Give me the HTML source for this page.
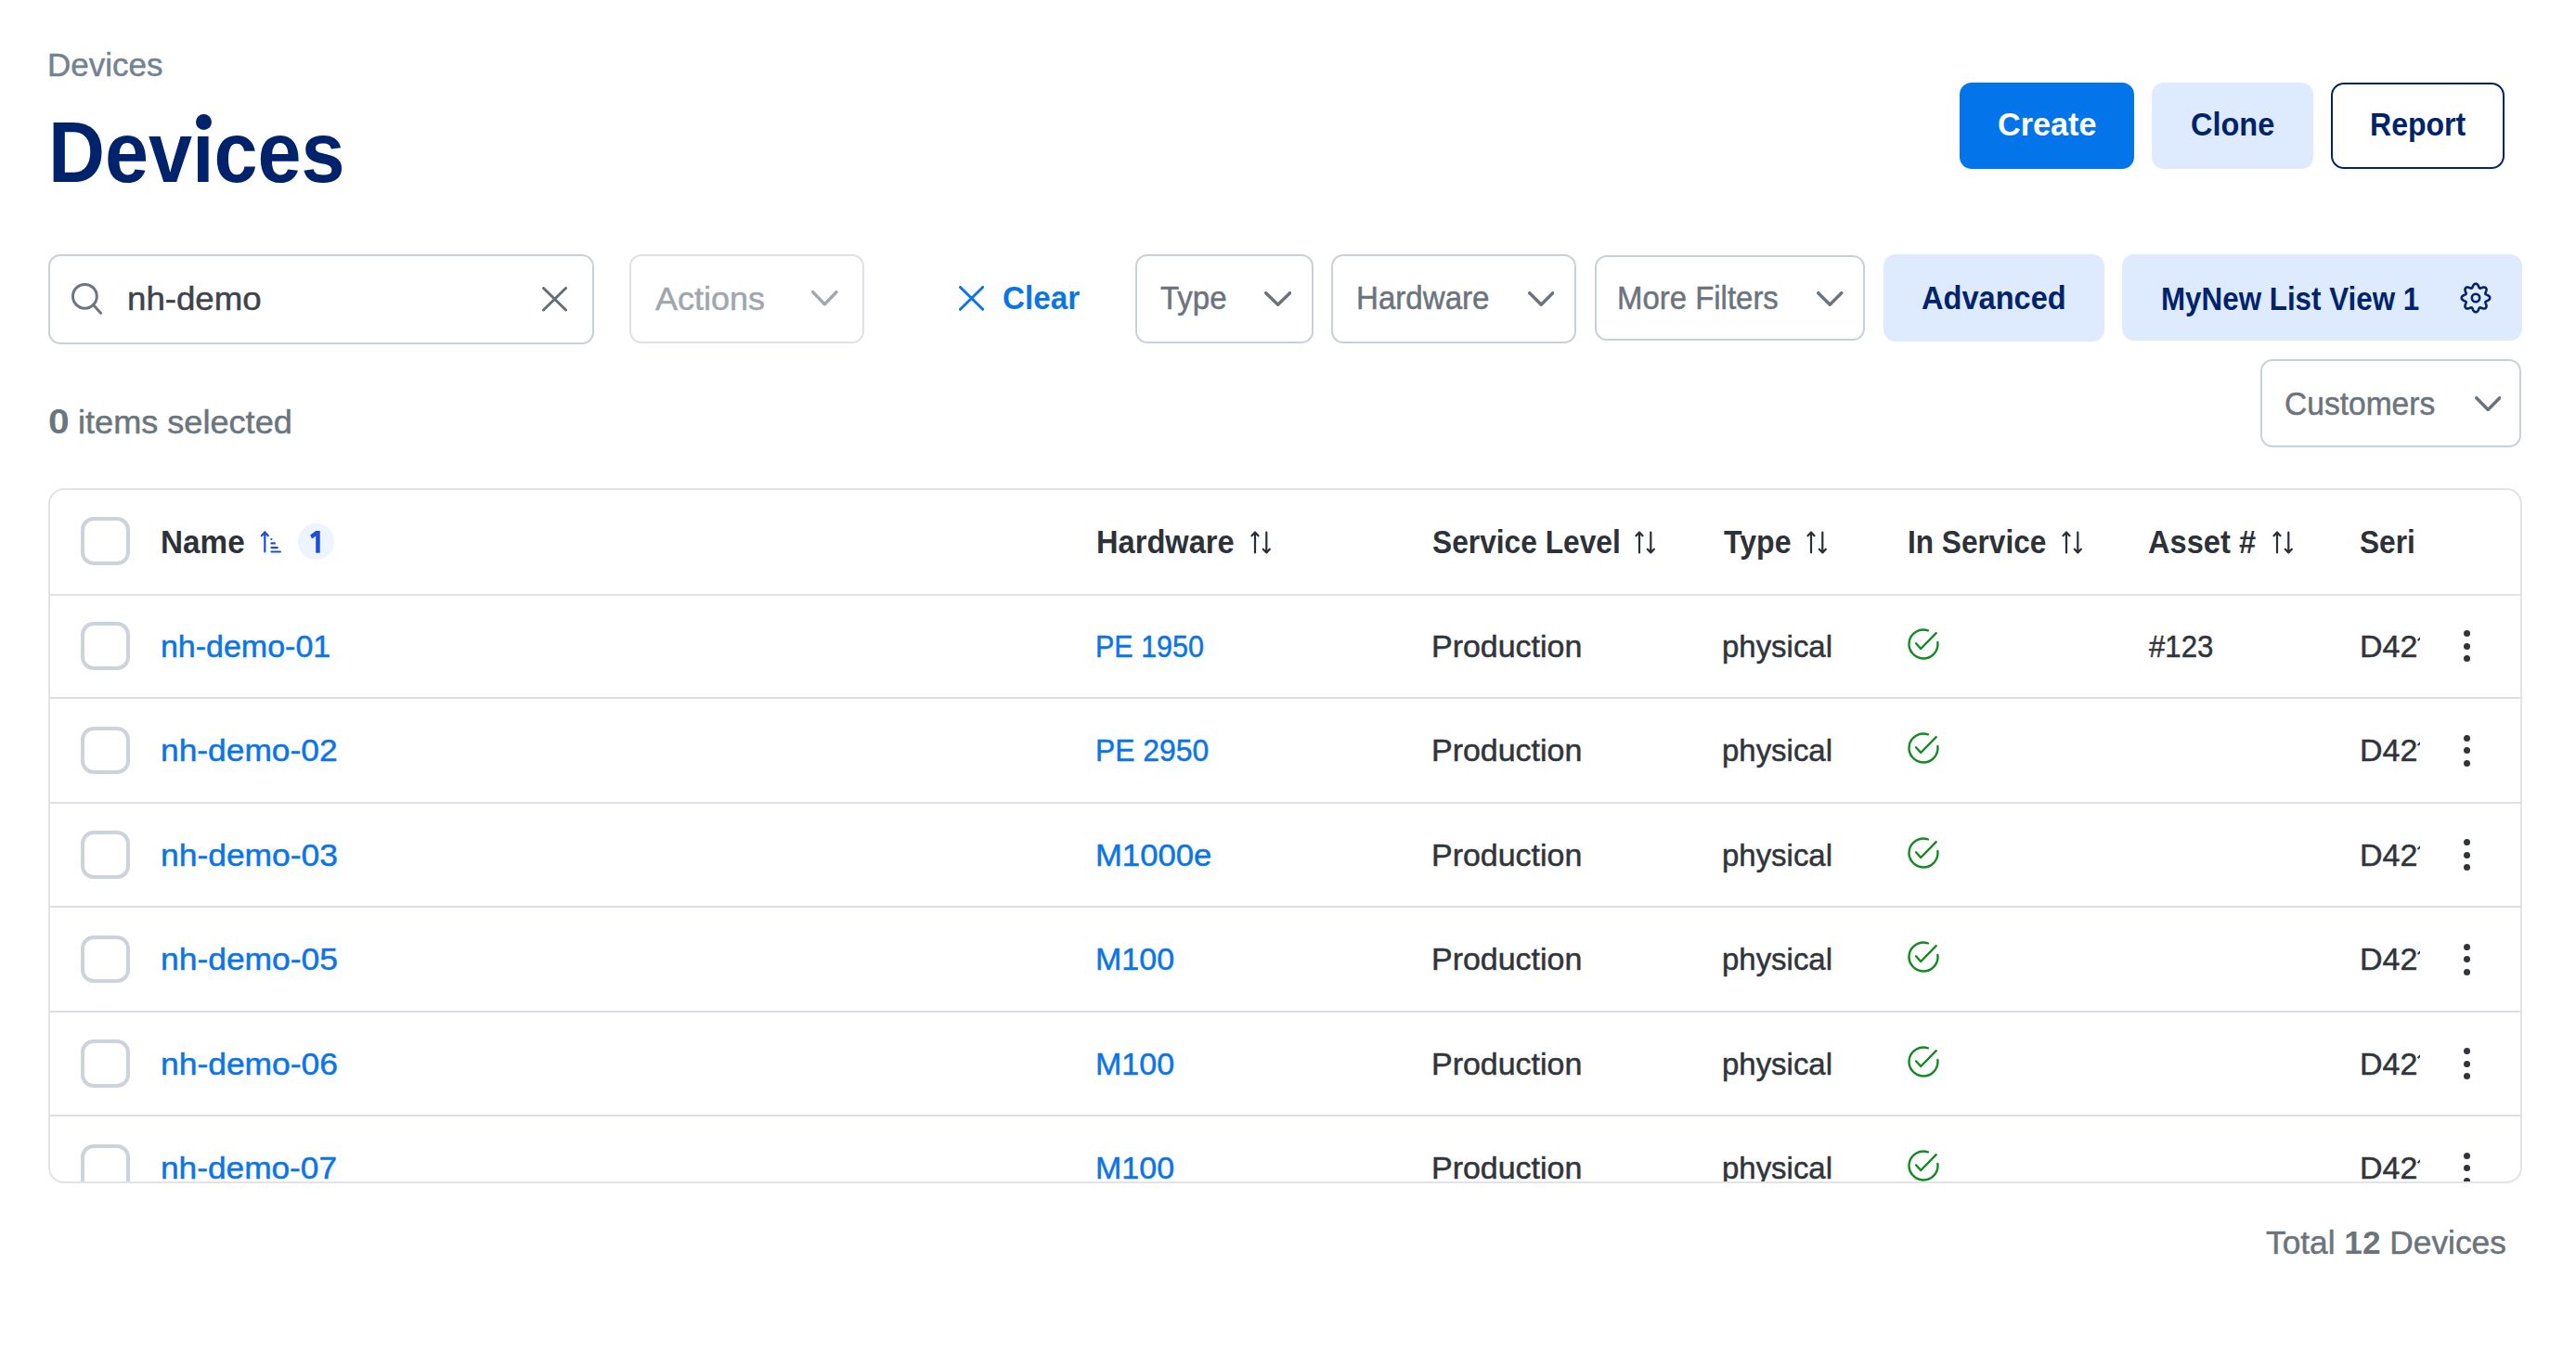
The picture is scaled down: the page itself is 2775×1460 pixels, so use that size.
<!DOCTYPE html>
<html><head><meta charset="utf-8"><title>Devices</title>
<style>
html,body{margin:0;padding:0;background:#fff;width:2775px;height:1460px;overflow:hidden}
body{position:relative;font-family:"Liberation Sans",sans-serif}
.a{position:absolute;display:block}
.t{position:absolute;line-height:1;white-space:nowrap;transform-origin:0 0}
.t b{font-weight:700;-webkit-text-stroke:0}
.r{-webkit-text-stroke:0.5px currentColor}
#tbl{position:absolute;left:0;top:0;width:2775px;height:1272.5px;overflow:hidden}
</style></head><body>
<div class=a style='left:211px;top:122.5px;width:17px;height:17px;border-radius:50%;background:#00236B'></div><div class=a style='left:2111.0px;top:89.0px;width:188.0px;height:93.0px;box-sizing:border-box;background:#0474EA;border-radius:13px'></div><div class=a style='left:2318.0px;top:89.0px;width:174.0px;height:93.0px;box-sizing:border-box;background:#DEEBFF;border-radius:13px'></div><div class=a style='left:2511.0px;top:89.0px;width:187.0px;height:93.0px;box-sizing:border-box;border:2.5px solid #00236B;border-radius:14px'></div><div class=a style='left:52.0px;top:274.0px;width:588.0px;height:97.0px;box-sizing:border-box;border:2px solid #C9D0D7;border-radius:13px;background:#fff'></div><div class=a style='left:678.0px;top:274.0px;width:252.5px;height:96.0px;box-sizing:border-box;border:2px solid #DEE2E7;border-radius:13px'></div><div class=a style='left:1223.0px;top:274.0px;width:192.0px;height:95.5px;box-sizing:border-box;border:2px solid #C9D0D7;border-radius:13px;background:#fff'></div><div class=a style='left:1434.0px;top:274.0px;width:263.5px;height:95.5px;box-sizing:border-box;border:2px solid #C9D0D7;border-radius:13px;background:#fff'></div><div class=a style='left:1717.5px;top:274.5px;width:291.8px;height:92.8px;box-sizing:border-box;border:2px solid #C9D0D7;border-radius:13px;background:#fff'></div><div class=a style='left:2029.0px;top:274.0px;width:238.0px;height:93.7px;box-sizing:border-box;background:#DEEBFF;border-radius:13px'></div><div class=a style='left:2286.0px;top:274.0px;width:431.0px;height:92.7px;box-sizing:border-box;background:#DEEBFF;border-radius:13px'></div><div class=a style='left:2435.4px;top:387.0px;width:280.9px;height:94.7px;box-sizing:border-box;border:2px solid #C9D0D7;border-radius:13px;background:#fff'></div><svg class=a style='left:70px;top:300px' width='45' height='45'><circle cx='21.4' cy='19.3' r='12.9' fill='none' stroke='#6C7680' stroke-width='3'/><path d='M30.5 28.4L38.5 37.3' stroke='#6C7680' stroke-width='3' stroke-linecap='round'/></svg><svg class=a style='left:584.0px;top:309.0px' width='27.0' height='26.5'><path d='M1.5 1.5L25.5 25.0M25.5 1.5L1.5 25.0' stroke='#646D76' stroke-width='3' stroke-linecap='round'/></svg><svg class=a style='left:874.3px;top:313.4px' width='28.7' height='16.6' viewBox='0 0 28.7 16.6'><polyline points='1.75,1.75 14.35,14.85 26.95,1.75' fill='none' stroke='#A3A8AE' stroke-width='3.5' stroke-linecap='round' stroke-linejoin='round'/></svg><svg class=a style='left:1033.0px;top:308.0px' width='27.2' height='26.8'><path d='M1.5 1.5L25.700000000000045 25.30000000000001M25.700000000000045 1.5L1.5 25.30000000000001' stroke='#0A74E8' stroke-width='3' stroke-linecap='round'/></svg><svg class=a style='left:1362.0px;top:313.7px' width='29.3' height='16.1' viewBox='0 0 29.3 16.1'><polyline points='1.75,1.75 14.65,14.35 27.55,1.75' fill='none' stroke='#6B747D' stroke-width='3.5' stroke-linecap='round' stroke-linejoin='round'/></svg><svg class=a style='left:1645.5px;top:313.7px' width='28.5' height='16.1' viewBox='0 0 28.5 16.1'><polyline points='1.75,1.75 14.25,14.35 26.75,1.75' fill='none' stroke='#6B747D' stroke-width='3.5' stroke-linecap='round' stroke-linejoin='round'/></svg><svg class=a style='left:1957.3px;top:313.7px' width='28.5' height='16.1' viewBox='0 0 28.5 16.1'><polyline points='1.75,1.75 14.25,14.35 26.75,1.75' fill='none' stroke='#6B747D' stroke-width='3.5' stroke-linecap='round' stroke-linejoin='round'/></svg><svg class=a style='left:2665.5px;top:426.7px' width='28.5' height='16.3' viewBox='0 0 28.5 16.3'><polyline points='1.75,1.75 14.25,14.55 26.75,1.75' fill='none' stroke='#6B747D' stroke-width='3.5' stroke-linecap='round' stroke-linejoin='round'/></svg><svg class=a style='left:2650px;top:303.7px' width='34' height='34'><path d='M17.00 1.80 L17.60 1.84 L18.18 2.03 L18.73 2.40 L19.22 2.95 L19.66 3.65 L20.02 4.41 L20.34 5.15 L20.64 5.80 L20.95 6.28 L21.32 6.56 L21.78 6.63 L22.35 6.51 L23.02 6.26 L23.77 5.96 L24.56 5.68 L25.36 5.50 L26.10 5.46 L26.75 5.58 L27.30 5.86 L27.75 6.25 L28.14 6.70 L28.42 7.25 L28.54 7.90 L28.50 8.64 L28.32 9.44 L28.04 10.23 L27.74 10.98 L27.49 11.65 L27.37 12.22 L27.44 12.68 L27.72 13.05 L28.20 13.36 L28.85 13.66 L29.59 13.98 L30.35 14.34 L31.05 14.78 L31.60 15.27 L31.97 15.82 L32.16 16.40 L32.20 17.00 L32.16 17.60 L31.97 18.18 L31.60 18.73 L31.05 19.22 L30.35 19.66 L29.59 20.02 L28.85 20.34 L28.20 20.64 L27.72 20.95 L27.44 21.32 L27.37 21.78 L27.49 22.35 L27.74 23.02 L28.04 23.77 L28.32 24.56 L28.50 25.36 L28.54 26.10 L28.42 26.75 L28.14 27.30 L27.75 27.75 L27.30 28.14 L26.75 28.42 L26.10 28.54 L25.36 28.50 L24.56 28.32 L23.77 28.04 L23.02 27.74 L22.35 27.49 L21.78 27.37 L21.32 27.44 L20.95 27.72 L20.64 28.20 L20.34 28.85 L20.02 29.59 L19.66 30.35 L19.22 31.05 L18.73 31.60 L18.18 31.97 L17.60 32.16 L17.00 32.20 L16.40 32.16 L15.82 31.97 L15.27 31.60 L14.78 31.05 L14.34 30.35 L13.98 29.59 L13.66 28.85 L13.36 28.20 L13.05 27.72 L12.68 27.44 L12.22 27.37 L11.65 27.49 L10.98 27.74 L10.23 28.04 L9.44 28.32 L8.64 28.50 L7.90 28.54 L7.25 28.42 L6.70 28.14 L6.25 27.75 L5.86 27.30 L5.58 26.75 L5.46 26.10 L5.50 25.36 L5.68 24.56 L5.96 23.77 L6.26 23.02 L6.51 22.35 L6.63 21.78 L6.56 21.32 L6.28 20.95 L5.80 20.64 L5.15 20.34 L4.41 20.02 L3.65 19.66 L2.95 19.22 L2.40 18.73 L2.03 18.18 L1.84 17.60 L1.80 17.00 L1.84 16.40 L2.03 15.82 L2.40 15.27 L2.95 14.78 L3.65 14.34 L4.41 13.98 L5.15 13.66 L5.80 13.36 L6.28 13.05 L6.56 12.68 L6.63 12.22 L6.51 11.65 L6.26 10.98 L5.96 10.23 L5.68 9.44 L5.50 8.64 L5.46 7.90 L5.58 7.25 L5.86 6.70 L6.25 6.25 L6.70 5.86 L7.25 5.58 L7.90 5.46 L8.64 5.50 L9.44 5.68 L10.23 5.96 L10.98 6.26 L11.65 6.51 L12.22 6.63 L12.68 6.56 L13.05 6.28 L13.36 5.80 L13.66 5.15 L13.98 4.41 L14.34 3.65 L14.78 2.95 L15.27 2.40 L15.82 2.03 L16.40 1.84 L17.00 1.80Z' fill='none' stroke='#00236B' stroke-width='2.6'/><circle cx='17' cy='17' r='4.2' fill='none' stroke='#00236B' stroke-width='2.6'/></svg>
<div class=a style='left:52.0px;top:526.0px;width:2665.0px;height:748.5px;box-sizing:border-box;border:2px solid #E1E3E7;border-radius:17px'></div><div class=a style='left:54px;top:640.00px;width:2661px;height:2px;background:#E1E3E7'></div><div class=a style='left:54px;top:751.00px;width:2661px;height:2px;background:#DCDFE3'></div><div class=a style='left:54px;top:863.50px;width:2661px;height:2px;background:#DCDFE3'></div><div class=a style='left:54px;top:976.00px;width:2661px;height:2px;background:#DCDFE3'></div><div class=a style='left:54px;top:1088.50px;width:2661px;height:2px;background:#DCDFE3'></div><div class=a style='left:54px;top:1201.00px;width:2661px;height:2px;background:#DCDFE3'></div><div class=a style='left:87.2px;top:557.2px;width:52.6px;height:51.6px;box-sizing:border-box;border:4px solid #CDD3DA;border-radius:14px'></div><svg class=a style='left:1346.8px;top:571.5px' width='24' height='25'><path d='M5 1.5V23.5M1.5 5.3L5 1.5L8.5 5.3M17.3 1.5V23.5M13.8 19.7L17.3 23.5L20.8 19.7' fill='none' stroke='#2A2F36' stroke-width='2.2' stroke-linecap='round' stroke-linejoin='round'/></svg><svg class=a style='left:1761.3px;top:571.5px' width='24' height='25'><path d='M5 1.5V23.5M1.5 5.3L5 1.5L8.5 5.3M17.3 1.5V23.5M13.8 19.7L17.3 23.5L20.8 19.7' fill='none' stroke='#2A2F36' stroke-width='2.2' stroke-linecap='round' stroke-linejoin='round'/></svg><svg class=a style='left:1945.5px;top:571.5px' width='24' height='25'><path d='M5 1.5V23.5M1.5 5.3L5 1.5L8.5 5.3M17.3 1.5V23.5M13.8 19.7L17.3 23.5L20.8 19.7' fill='none' stroke='#2A2F36' stroke-width='2.2' stroke-linecap='round' stroke-linejoin='round'/></svg><svg class=a style='left:2221.0px;top:571.5px' width='24' height='25'><path d='M5 1.5V23.5M1.5 5.3L5 1.5L8.5 5.3M17.3 1.5V23.5M13.8 19.7L17.3 23.5L20.8 19.7' fill='none' stroke='#2A2F36' stroke-width='2.2' stroke-linecap='round' stroke-linejoin='round'/></svg><svg class=a style='left:2448.0px;top:571.5px' width='24' height='25'><path d='M5 1.5V23.5M1.5 5.3L5 1.5L8.5 5.3M17.3 1.5V23.5M13.8 19.7L17.3 23.5L20.8 19.7' fill='none' stroke='#2A2F36' stroke-width='2.2' stroke-linecap='round' stroke-linejoin='round'/></svg><svg class=a style='left:280px;top:571px' width='26' height='26'><path d='M5.3 2.4V23.5M1.8 6.3L5.3 2.4L8.8 6.3M12.4 10h0.1M12.4 14.4H15.9M12.4 19.1H18.8M12.4 23.5H21.9' fill='none' stroke='#1C4ED8' stroke-width='2.2' stroke-linecap='round' stroke-linejoin='round'/></svg><div class=a style='left:321px;top:564px;width:38.5px;height:38.5px;border-radius:50%;background:#EDF4FE'></div><svg class=a style='left:330px;top:568px' width='20' height='30'><path d='M10.2 4H14.7V27.7H10.2V9.6L6 12.4L4.2 8.6Z' fill='#1C4ED8'/></svg>
<div class='t r' style="left:50.60px;top:51.57px;font-size:35.0px;font-weight:400;color:#728391;transform:scaleX(0.9992);">Devices</div><div class='t' style="left:51.52px;top:118.30px;font-size:92.5px;font-weight:700;color:#00236B;transform:scaleX(0.9138);">Dev&#305;ces</div><div class='t' style="left:2152.04px;top:117.25px;font-size:35.5px;font-weight:700;color:#FFFFFF;transform:scaleX(0.9630);">Create</div><div class='t' style="left:2360.38px;top:117.25px;font-size:35.5px;font-weight:700;color:#00236B;transform:scaleX(0.9156);">Clone</div><div class='t' style="left:2552.99px;top:117.25px;font-size:35.5px;font-weight:700;color:#00236B;transform:scaleX(0.9027);">Report</div><div class='t r' style="left:137.38px;top:305.10px;font-size:34.5px;font-weight:400;color:#3D434B;transform:scaleX(1.0624);">nh-demo</div><div class='t r' style="left:706.00px;top:303.87px;font-size:35.0px;font-weight:400;color:#A0A6AD;transform:scaleX(1.0281);">Actions</div><div class='t' style="left:1079.85px;top:303.37px;font-size:35.0px;font-weight:700;color:#0A74E8;transform:scaleX(0.9488);">Clear</div><div class='t r' style="left:1250.24px;top:304.00px;font-size:34.5px;font-weight:400;color:#6B747D;transform:scaleX(0.9569);">Type</div><div class='t r' style="left:1460.62px;top:304.10px;font-size:34.5px;font-weight:400;color:#6B747D;transform:scaleX(0.9593);">Hardware</div><div class='t r' style="left:1741.64px;top:304.10px;font-size:34.5px;font-weight:400;color:#6B747D;transform:scaleX(0.9545);">More Filters</div><div class='t' style="left:2069.97px;top:303.47px;font-size:35.0px;font-weight:700;color:#00236B;transform:scaleX(0.9305);">Advanced</div><div class='t' style="left:2327.71px;top:303.57px;font-size:35.0px;font-weight:700;color:#00236B;transform:scaleX(0.8958);">MyNew List View 1</div><div class='t r' style="left:2461.38px;top:416.87px;font-size:35.0px;font-weight:400;color:#6B747D;transform:scaleX(0.9584);">Customers</div><div class='t' style="left:51.67px;top:437.23px;font-size:36.0px;font-weight:700;color:#6B757E;transform:scaleX(1.1333);">0</div><div class='t r' style="left:83.94px;top:437.37px;font-size:35.0px;font-weight:400;color:#6B757E;transform:scaleX(1.0318);">items selected</div><div class='t' style="left:173.40px;top:566.37px;font-size:35.0px;font-weight:700;color:#2D3238;transform:scaleX(0.9511);">Name</div><div class='t' style="left:1181.34px;top:566.37px;font-size:35.0px;font-weight:700;color:#2D3238;transform:scaleX(0.9321);">Hardware</div><div class='t' style="left:1543.49px;top:566.37px;font-size:35.0px;font-weight:700;color:#2D3238;transform:scaleX(0.9064);">Service Level</div><div class='t' style="left:1856.50px;top:566.37px;font-size:35.0px;font-weight:700;color:#2D3238;transform:scaleX(0.9167);">Type</div><div class='t' style="left:2054.89px;top:566.37px;font-size:35.0px;font-weight:700;color:#2D3238;transform:scaleX(0.9031);">In Service</div><div class='t' style="left:2314.17px;top:566.37px;font-size:35.0px;font-weight:700;color:#2D3238;transform:scaleX(0.9325);">Asset #</div><div class='t' style="left:2542.30px;top:566.37px;font-size:35.0px;font-weight:700;color:#2D3238;transform:scaleX(0.9048);">Seri</div><div class='t r' style="left:2440.89px;top:1320.57px;font-size:35.0px;font-weight:400;color:#6B747D;transform:scaleX(1.0078);">Total <b>12</b> Devices</div>
<div id=tbl>
<div class=a style='left:87.2px;top:670.4px;width:52.6px;height:51.6px;box-sizing:border-box;border:4px solid #CDD3DA;border-radius:14px'></div><div class='t r' style="left:172.90px;top:678.52px;font-size:34.0px;font-weight:400;color:#0A74E8;transform:scaleX(1.0000);">nh-demo-01</div><div class='t r' style="left:1180.31px;top:678.52px;font-size:34.0px;font-weight:400;color:#0A74E8;transform:scaleX(0.8968);">PE 1950</div><div class='t r' style="left:1542.00px;top:678.52px;font-size:34.0px;font-weight:400;color:#30353B;transform:scaleX(0.9987);">Production</div><div class='t r' style="left:1854.56px;top:678.52px;font-size:34.0px;font-weight:400;color:#30353B;transform:scaleX(0.9689);">physical</div><div class='t r' style="left:2315.20px;top:678.52px;font-size:34.0px;font-weight:400;color:#30353B;transform:scaleX(0.9162);">#123</div><div class=a style='left:2540px;top:641.0px;width:67px;height:112px;overflow:hidden'><div class='t r' style="left:1.60px;top:37.52px;font-size:34.0px;font-weight:400;color:#30353B;transform:scaleX(0.9987);">D42</div></div><svg class=a style='left:2602px;top:684.0px' width='6' height='8'><path d='M1.8 5.6L5 2.2V5.2L3.2 6.8Z' fill='#30353B'/></svg><svg class=a style='left:2052px;top:673.9px' width='40' height='40'><path d='M35.37 18A15.5 15.5 0 1 1 24.9 5.29' fill='none' stroke='#138A22' stroke-width='2.4' stroke-linecap='round'/><path d='M12 19.3L17.2 25L33.7 8.2' fill='none' stroke='#138A22' stroke-width='2.4' stroke-linecap='round' stroke-linejoin='round'/></svg><div class=a style='left:2654.1px;top:679.1px;width:7.2px;height:7.2px;border-radius:50%;background:#30353B'></div><div class=a style='left:2654.1px;top:692.7px;width:7.2px;height:7.2px;border-radius:50%;background:#30353B'></div><div class=a style='left:2654.1px;top:706.1px;width:7.2px;height:7.2px;border-radius:50%;background:#30353B'></div><div class=a style='left:87.2px;top:782.9px;width:52.6px;height:51.6px;box-sizing:border-box;border:4px solid #CDD3DA;border-radius:14px'></div><div class='t r' style="left:172.82px;top:791.02px;font-size:34.0px;font-weight:400;color:#0A74E8;transform:scaleX(1.0394);">nh-demo-02</div><div class='t r' style="left:1180.19px;top:791.02px;font-size:34.0px;font-weight:400;color:#0A74E8;transform:scaleX(0.9365);">PE 2950</div><div class='t r' style="left:1542.00px;top:791.02px;font-size:34.0px;font-weight:400;color:#30353B;transform:scaleX(0.9987);">Production</div><div class='t r' style="left:1854.56px;top:791.02px;font-size:34.0px;font-weight:400;color:#30353B;transform:scaleX(0.9689);">physical</div><div class=a style='left:2540px;top:753.5px;width:67px;height:112px;overflow:hidden'><div class='t r' style="left:1.60px;top:37.52px;font-size:34.0px;font-weight:400;color:#30353B;transform:scaleX(0.9987);">D42</div></div><svg class=a style='left:2602px;top:796.5px' width='6' height='8'><path d='M1.8 5.6L5 2.2V5.2L3.2 6.8Z' fill='#30353B'/></svg><svg class=a style='left:2052px;top:786.4px' width='40' height='40'><path d='M35.37 18A15.5 15.5 0 1 1 24.9 5.29' fill='none' stroke='#138A22' stroke-width='2.4' stroke-linecap='round'/><path d='M12 19.3L17.2 25L33.7 8.2' fill='none' stroke='#138A22' stroke-width='2.4' stroke-linecap='round' stroke-linejoin='round'/></svg><div class=a style='left:2654.1px;top:791.6px;width:7.2px;height:7.2px;border-radius:50%;background:#30353B'></div><div class=a style='left:2654.1px;top:805.2px;width:7.2px;height:7.2px;border-radius:50%;background:#30353B'></div><div class=a style='left:2654.1px;top:818.6px;width:7.2px;height:7.2px;border-radius:50%;background:#30353B'></div><div class=a style='left:87.2px;top:895.4px;width:52.6px;height:51.6px;box-sizing:border-box;border:4px solid #CDD3DA;border-radius:14px'></div><div class='t r' style="left:172.82px;top:903.52px;font-size:34.0px;font-weight:400;color:#0A74E8;transform:scaleX(1.0417);">nh-demo-03</div><div class='t r' style="left:1179.94px;top:903.52px;font-size:34.0px;font-weight:400;color:#0A74E8;transform:scaleX(1.0193);">M1000e</div><div class='t r' style="left:1542.00px;top:903.52px;font-size:34.0px;font-weight:400;color:#30353B;transform:scaleX(0.9987);">Production</div><div class='t r' style="left:1854.56px;top:903.52px;font-size:34.0px;font-weight:400;color:#30353B;transform:scaleX(0.9689);">physical</div><div class=a style='left:2540px;top:866.0px;width:67px;height:112px;overflow:hidden'><div class='t r' style="left:1.60px;top:37.52px;font-size:34.0px;font-weight:400;color:#30353B;transform:scaleX(0.9987);">D42</div></div><svg class=a style='left:2602px;top:909.0px' width='6' height='8'><path d='M1.8 5.6L5 2.2V5.2L3.2 6.8Z' fill='#30353B'/></svg><svg class=a style='left:2052px;top:898.9px' width='40' height='40'><path d='M35.37 18A15.5 15.5 0 1 1 24.9 5.29' fill='none' stroke='#138A22' stroke-width='2.4' stroke-linecap='round'/><path d='M12 19.3L17.2 25L33.7 8.2' fill='none' stroke='#138A22' stroke-width='2.4' stroke-linecap='round' stroke-linejoin='round'/></svg><div class=a style='left:2654.1px;top:904.1px;width:7.2px;height:7.2px;border-radius:50%;background:#30353B'></div><div class=a style='left:2654.1px;top:917.7px;width:7.2px;height:7.2px;border-radius:50%;background:#30353B'></div><div class=a style='left:2654.1px;top:931.1px;width:7.2px;height:7.2px;border-radius:50%;background:#30353B'></div><div class=a style='left:87.2px;top:1007.9px;width:52.6px;height:51.6px;box-sizing:border-box;border:4px solid #CDD3DA;border-radius:14px'></div><div class='t r' style="left:172.82px;top:1016.02px;font-size:34.0px;font-weight:400;color:#0A74E8;transform:scaleX(1.0417);">nh-demo-05</div><div class='t r' style="left:1180.00px;top:1016.02px;font-size:34.0px;font-weight:400;color:#0A74E8;transform:scaleX(1.0000);">M100</div><div class='t r' style="left:1542.00px;top:1016.02px;font-size:34.0px;font-weight:400;color:#30353B;transform:scaleX(0.9987);">Production</div><div class='t r' style="left:1854.56px;top:1016.02px;font-size:34.0px;font-weight:400;color:#30353B;transform:scaleX(0.9689);">physical</div><div class=a style='left:2540px;top:978.5px;width:67px;height:112px;overflow:hidden'><div class='t r' style="left:1.60px;top:37.52px;font-size:34.0px;font-weight:400;color:#30353B;transform:scaleX(0.9987);">D42</div></div><svg class=a style='left:2602px;top:1021.5px' width='6' height='8'><path d='M1.8 5.6L5 2.2V5.2L3.2 6.8Z' fill='#30353B'/></svg><svg class=a style='left:2052px;top:1011.4px' width='40' height='40'><path d='M35.37 18A15.5 15.5 0 1 1 24.9 5.29' fill='none' stroke='#138A22' stroke-width='2.4' stroke-linecap='round'/><path d='M12 19.3L17.2 25L33.7 8.2' fill='none' stroke='#138A22' stroke-width='2.4' stroke-linecap='round' stroke-linejoin='round'/></svg><div class=a style='left:2654.1px;top:1016.6px;width:7.2px;height:7.2px;border-radius:50%;background:#30353B'></div><div class=a style='left:2654.1px;top:1030.2px;width:7.2px;height:7.2px;border-radius:50%;background:#30353B'></div><div class=a style='left:2654.1px;top:1043.6px;width:7.2px;height:7.2px;border-radius:50%;background:#30353B'></div><div class=a style='left:87.2px;top:1120.4px;width:52.6px;height:51.6px;box-sizing:border-box;border:4px solid #CDD3DA;border-radius:14px'></div><div class='t r' style="left:172.82px;top:1128.52px;font-size:34.0px;font-weight:400;color:#0A74E8;transform:scaleX(1.0417);">nh-demo-06</div><div class='t r' style="left:1180.00px;top:1128.52px;font-size:34.0px;font-weight:400;color:#0A74E8;transform:scaleX(1.0000);">M100</div><div class='t r' style="left:1542.00px;top:1128.52px;font-size:34.0px;font-weight:400;color:#30353B;transform:scaleX(0.9987);">Production</div><div class='t r' style="left:1854.56px;top:1128.52px;font-size:34.0px;font-weight:400;color:#30353B;transform:scaleX(0.9689);">physical</div><div class=a style='left:2540px;top:1091.0px;width:67px;height:112px;overflow:hidden'><div class='t r' style="left:1.60px;top:37.52px;font-size:34.0px;font-weight:400;color:#30353B;transform:scaleX(0.9987);">D42</div></div><svg class=a style='left:2602px;top:1134.0px' width='6' height='8'><path d='M1.8 5.6L5 2.2V5.2L3.2 6.8Z' fill='#30353B'/></svg><svg class=a style='left:2052px;top:1123.9px' width='40' height='40'><path d='M35.37 18A15.5 15.5 0 1 1 24.9 5.29' fill='none' stroke='#138A22' stroke-width='2.4' stroke-linecap='round'/><path d='M12 19.3L17.2 25L33.7 8.2' fill='none' stroke='#138A22' stroke-width='2.4' stroke-linecap='round' stroke-linejoin='round'/></svg><div class=a style='left:2654.1px;top:1129.1px;width:7.2px;height:7.2px;border-radius:50%;background:#30353B'></div><div class=a style='left:2654.1px;top:1142.7px;width:7.2px;height:7.2px;border-radius:50%;background:#30353B'></div><div class=a style='left:2654.1px;top:1156.1px;width:7.2px;height:7.2px;border-radius:50%;background:#30353B'></div><div class=a style='left:87.2px;top:1232.9px;width:52.6px;height:51.6px;box-sizing:border-box;border:4px solid #CDD3DA;border-radius:14px'></div><div class='t r' style="left:172.83px;top:1241.02px;font-size:34.0px;font-weight:400;color:#0A74E8;transform:scaleX(1.0367);">nh-demo-07</div><div class='t r' style="left:1180.00px;top:1241.02px;font-size:34.0px;font-weight:400;color:#0A74E8;transform:scaleX(1.0000);">M100</div><div class='t r' style="left:1542.00px;top:1241.02px;font-size:34.0px;font-weight:400;color:#30353B;transform:scaleX(0.9987);">Production</div><div class='t r' style="left:1854.56px;top:1241.02px;font-size:34.0px;font-weight:400;color:#30353B;transform:scaleX(0.9689);">physical</div><div class=a style='left:2540px;top:1203.5px;width:67px;height:112px;overflow:hidden'><div class='t r' style="left:1.60px;top:37.52px;font-size:34.0px;font-weight:400;color:#30353B;transform:scaleX(0.9987);">D42</div></div><svg class=a style='left:2602px;top:1246.5px' width='6' height='8'><path d='M1.8 5.6L5 2.2V5.2L3.2 6.8Z' fill='#30353B'/></svg><svg class=a style='left:2052px;top:1236.4px' width='40' height='40'><path d='M35.37 18A15.5 15.5 0 1 1 24.9 5.29' fill='none' stroke='#138A22' stroke-width='2.4' stroke-linecap='round'/><path d='M12 19.3L17.2 25L33.7 8.2' fill='none' stroke='#138A22' stroke-width='2.4' stroke-linecap='round' stroke-linejoin='round'/></svg><div class=a style='left:2654.1px;top:1241.6px;width:7.2px;height:7.2px;border-radius:50%;background:#30353B'></div><div class=a style='left:2654.1px;top:1255.2px;width:7.2px;height:7.2px;border-radius:50%;background:#30353B'></div><div class=a style='left:2654.1px;top:1268.6px;width:7.2px;height:7.2px;border-radius:50%;background:#30353B'></div>
</div>
</body></html>
